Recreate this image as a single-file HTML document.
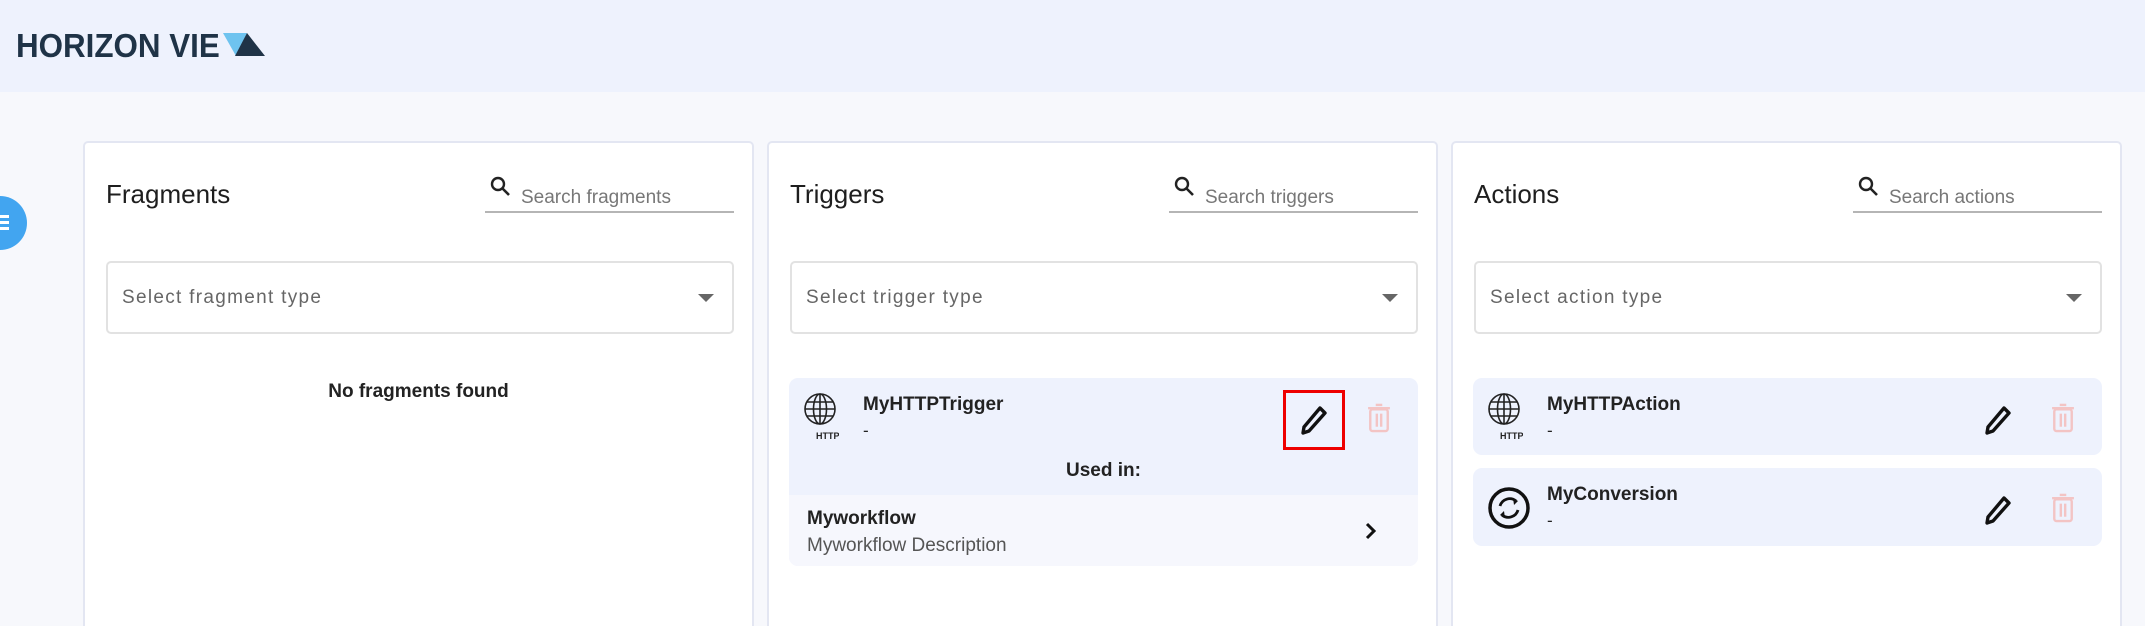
<!DOCTYPE html>
<html><head><meta charset="utf-8"><style>
*{box-sizing:border-box;margin:0;padding:0}
html{width:2145px;height:626px;overflow:hidden}
body{width:2145px;height:626px;overflow:hidden;background:#f7f8fc;font-family:"Liberation Sans",sans-serif;position:relative;color:#222}
.hdr{position:absolute;left:0;top:0;width:2145px;height:92px;background:#eef2fd}
.logo{position:absolute;left:16px;top:27px;font-size:33px;font-weight:bold;color:#1f3347;transform:scaleX(0.95);transform-origin:left top;white-space:nowrap}
.abs{position:absolute}
.panel{position:absolute;top:141px;width:671px;height:485px;background:#fff;border:2px solid #e3e6f2;border-bottom:none;border-radius:5px 5px 0 0}
.title{position:absolute;left:21px;top:36px;font-size:26px;color:#1e1e1e}
.search{position:absolute;left:400px;top:28px;width:249px;height:42px;border-bottom:2px solid #b5b5b5}
.search span{position:absolute;left:36px;top:16px;font-size:19px;color:#777}
.search svg{position:absolute;left:4px;top:4px}
.sel{position:absolute;left:21px;top:118px;width:628px;height:73px;border:2px solid #e2e2e2;border-radius:5px}
.sel span{position:absolute;left:14px;top:24px;font-size:19px;color:#666;letter-spacing:1.3px}
.sel i{position:absolute;right:18px;top:31px;border-left:8px solid transparent;border-right:8px solid transparent;border-top:8px solid #666}
.card{position:absolute;left:20px;width:629px;background:#eef2fd;border-radius:9px}
.nm{position:absolute;left:74px;top:16px;font-size:19px;font-weight:bold}
.ds{position:absolute;left:74px;top:43px;font-size:17px}
</style></head><body>
<div class="hdr">
<div class="logo">HORIZON VIE</div>
<svg class="abs" style="left:223px;top:33px" width="44" height="24"><polygon points="0,0 24,0 13,23" fill="#6ec3ef"/><polygon points="24,0 12,23 42,23" fill="#1f3347"/></svg>
</div>
<div class="abs" style="left:-27px;top:196px;width:54px;height:54px;border-radius:50%;background:#42a5f0"></div>
<div class="abs" style="left:0;top:215px;width:9px;height:3px;background:#fff;box-shadow:0 6px 0 #fff,0 12px 0 #fff"></div>

<div class="panel" style="left:83px">
<div class="title">Fragments</div>
<div class="search"><svg width="24" height="24" viewBox="0 0 24 24"><circle cx="9" cy="9" r="6" fill="none" stroke="#222" stroke-width="2.4"/><line x1="13.5" y1="13.5" x2="20" y2="20" stroke="#222" stroke-width="2.6"/></svg><span>Search fragments</span></div>
<div class="sel"><span>Select fragment type</span><i></i></div>
<div class="abs" style="left:0;width:667px;top:238px;text-align:center;font-size:19px;font-weight:bold">No fragments found</div>
</div>

<div class="panel" style="left:767px">
<div class="title">Triggers</div>
<div class="search"><svg width="24" height="24" viewBox="0 0 24 24"><circle cx="9" cy="9" r="6" fill="none" stroke="#222" stroke-width="2.4"/><line x1="13.5" y1="13.5" x2="20" y2="20" stroke="#222" stroke-width="2.6"/></svg><span>Search triggers</span></div>
<div class="sel"><span>Select trigger type</span><i></i></div>
<div class="card" style="top:235px;height:188px;overflow:hidden">
<svg class="abs" style="left:14px;top:14px" width="36" height="50" viewBox="0 0 36 50"><g fill="none" stroke="#222" stroke-width="1.6"><circle cx="17" cy="17" r="15"/><ellipse cx="17" cy="17" rx="6.5" ry="15"/><line x1="17" y1="2" x2="17" y2="32"/><line x1="2" y1="17" x2="32" y2="17"/><line x1="4" y1="10" x2="30" y2="10"/><line x1="4" y1="24" x2="30" y2="24"/></g><text x="13" y="47" font-size="9" font-weight="bold" font-family="Liberation Sans" fill="#222">HTTP</text></svg>
<div class="nm">MyHTTPTrigger</div><div class="ds">-</div>
<div class="abs" style="left:494px;top:12px;width:62px;height:60px;border:3px solid #e00"></div>
<svg class="abs" style="left:511px;top:27px" width="28" height="30" viewBox="0 0 28 30"><path d="M20 3 L25 8 L9 26 L3 28 L4 22 Z" fill="none" stroke="#111" stroke-width="3.4" stroke-linejoin="round"/></svg>
<svg class="abs" style="left:578px;top:24px" width="24" height="32" viewBox="0 0 22 28"><g fill="none" stroke="#f3c4c4" stroke-width="2.2"><rect x="3" y="6" width="16" height="20" rx="2"/><line x1="1" y1="5" x2="21" y2="5"/><line x1="8" y1="2" x2="14" y2="2"/><line x1="9" y1="10" x2="9" y2="22"/><line x1="13" y1="10" x2="13" y2="22"/></g></svg>
<div class="abs" style="left:0;width:629px;top:82px;text-align:center;font-size:19px;font-weight:bold">Used in:</div>
<div class="abs" style="left:0;top:117px;width:629px;height:71px;background:#f6f7fd"></div>
<div class="abs" style="left:18px;top:130px;font-size:19px;font-weight:bold">Myworkflow</div>
<div class="abs" style="left:18px;top:157px;font-size:19px;color:#555">Myworkflow Description</div>
<svg class="abs" style="left:575px;top:143px" width="14" height="20" viewBox="0 0 14 20"><path d="M3 3 L10 10 L3 17" fill="none" stroke="#111" stroke-width="3"/></svg>
</div>
</div>

<div class="panel" style="left:1451px">
<div class="title">Actions</div>
<div class="search"><svg width="24" height="24" viewBox="0 0 24 24"><circle cx="9" cy="9" r="6" fill="none" stroke="#222" stroke-width="2.4"/><line x1="13.5" y1="13.5" x2="20" y2="20" stroke="#222" stroke-width="2.6"/></svg><span>Search actions</span></div>
<div class="sel"><span>Select action type</span><i></i></div>
<div class="card" style="top:235px;height:77px">
<svg class="abs" style="left:14px;top:14px" width="36" height="50" viewBox="0 0 36 50"><g fill="none" stroke="#222" stroke-width="1.6"><circle cx="17" cy="17" r="15"/><ellipse cx="17" cy="17" rx="6.5" ry="15"/><line x1="17" y1="2" x2="17" y2="32"/><line x1="2" y1="17" x2="32" y2="17"/><line x1="4" y1="10" x2="30" y2="10"/><line x1="4" y1="24" x2="30" y2="24"/></g><text x="13" y="47" font-size="9" font-weight="bold" font-family="Liberation Sans" fill="#222">HTTP</text></svg>
<div class="nm">MyHTTPAction</div><div class="ds">-</div>
<svg class="abs" style="left:511px;top:27px" width="28" height="30" viewBox="0 0 28 30"><path d="M20 3 L25 8 L9 26 L3 28 L4 22 Z" fill="none" stroke="#111" stroke-width="3.4" stroke-linejoin="round"/></svg>
<svg class="abs" style="left:578px;top:24px" width="24" height="32" viewBox="0 0 22 28"><g fill="none" stroke="#f3c4c4" stroke-width="2.2"><rect x="3" y="6" width="16" height="20" rx="2"/><line x1="1" y1="5" x2="21" y2="5"/><line x1="8" y1="2" x2="14" y2="2"/><line x1="9" y1="10" x2="9" y2="22"/><line x1="13" y1="10" x2="13" y2="22"/></g></svg>
</div>
<div class="card" style="top:325px;height:78px">
<svg class="abs" style="left:14px;top:18px" width="46" height="46" viewBox="0 0 46 46"><circle cx="22" cy="22" r="19" fill="none" stroke="#111" stroke-width="3.5"/><path d="M29 15 A10 10 0 0 0 13 20 M15 29 A10 10 0 0 0 31 24" fill="none" stroke="#111" stroke-width="2.8"/><path d="M26 12 L31 15 L27 19Z M18 32 L13 29 L17 25Z" fill="#111"/></svg>
<div class="nm">MyConversion</div><div class="ds">-</div>
<svg class="abs" style="left:511px;top:27px" width="28" height="30" viewBox="0 0 28 30"><path d="M20 3 L25 8 L9 26 L3 28 L4 22 Z" fill="none" stroke="#111" stroke-width="3.4" stroke-linejoin="round"/></svg>
<svg class="abs" style="left:578px;top:24px" width="24" height="32" viewBox="0 0 22 28"><g fill="none" stroke="#f3c4c4" stroke-width="2.2"><rect x="3" y="6" width="16" height="20" rx="2"/><line x1="1" y1="5" x2="21" y2="5"/><line x1="8" y1="2" x2="14" y2="2"/><line x1="9" y1="10" x2="9" y2="22"/><line x1="13" y1="10" x2="13" y2="22"/></g></svg>
</div>
</div>
</body></html>
